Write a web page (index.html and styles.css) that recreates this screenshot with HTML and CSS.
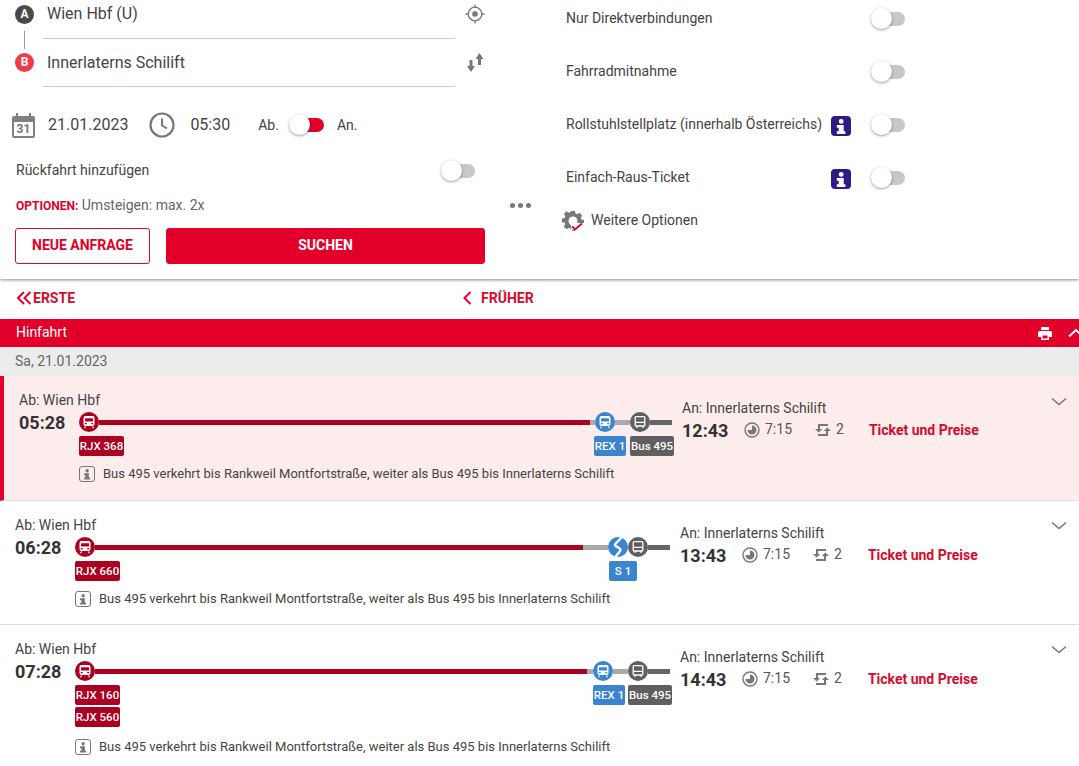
FILE: index.html
```html
<!DOCTYPE html>
<html lang="de">
<head>
  <meta charset="UTF-8" />
  <meta name="viewport" content="width=device-width, initial-scale=1.0"/>
  <title>Verbindungen</title>
  <link rel="stylesheet" href="styles.css">
</head>
<body>

  <!-- Icons -->
  <svg class="sprite" xmlns="http://www.w3.org/2000/svg">
    <symbol id="i-train" viewBox="0 0 20 20">
      <circle cx="10" cy="10" r="10" fill="currentColor"/>
      <path fill="#fff" d="M6.5 4h7A2 2 0 0 1 15.500 6v6a2 2 0 0 1-2 2h-7a2 2 0 0 1-2-2V6a2 2 0 0 1 2-2z"/>
      <rect x="6" y="6.200" width="8" height="3.300" rx=".5" fill="currentColor"/>
      <path fill="currentColor" d="M5.800 11h2v1.300h-2zM12.200 11h2v1.300h-2z"/>
      <path fill="none" stroke="#fff" stroke-width="1.200" d="M6.500 14.500l-1 1.800M13.500 14.500l1 1.800"/>
    </symbol>
    <symbol id="i-bus" viewBox="0 0 20 20">
      <circle cx="10" cy="10" r="10" fill="currentColor"/>
      <rect x="5.200" y="4.600" width="9.600" height="9.400" rx="1" fill="none" stroke="#fff" stroke-width="1.300"/>
      <path fill="none" stroke="#fff" stroke-width="1.200" d="M5.200 10.300h9.600M7 14v2M13 14v2"/>
    </symbol>
    <symbol id="i-sbahn" viewBox="0 0 20 20">
      <circle cx="10" cy="10" r="10" fill="currentColor"/>
      <path fill="none" stroke="#fff" stroke-width="2.400" d="M14 -1C13 3 7 5.500 7 8c0 2 5.500 2.500 5.500 5 0 2-4 4-5 8"/>
    </symbol>
    <symbol id="i-info" viewBox="0 0 20 20">
      <path fill="currentColor" d="M7.800 5.400a2.400 2.400 0 1 1 4.800 0 2.400 2.400 0 0 1-4.800 0zM5.800 9h6.900v6.200h1.700v2.800H5.800v-2.800h1.900v-3.400H5.800z"/>
    </symbol>
    <symbol id="i-chev" viewBox="0 0 16 10">
      <path fill="none" stroke="currentColor" stroke-width="1.500" d="M1 1.500l7 6 7-6"/>
    </symbol>
    <symbol id="i-duration" viewBox="0 0 16 16">
      <circle cx="8" cy="8" r="7" fill="none" stroke="currentColor" stroke-width="1.400"/>
      <path fill="currentColor" d="M8 3.500a4.500 4.500 0 1 1-4.500 4.500H8z"/>
    </symbol>
    <symbol id="i-changes" viewBox="0 0 16 14">
      <path fill="currentColor" d="M3 1h10v2H5v3h2.200L3.600 9.500 0 6h3zM13 13H3v-2h8V8H8.800L12.400 4.500 16 8h-3z"/>
    </symbol>
  </svg>

  <section class="search">
    <div class="search-left">
      <div class="station station-a">
        <span class="badge badge-a">A</span>
        <div class="field">Wien Hbf (U)</div>
        <svg class="field-icon" viewBox="0 0 20 20" width="20" height="20">
          <circle cx="10" cy="10" r="6.800" fill="none" stroke="#777" stroke-width="1.300"/>
          <circle cx="10" cy="10" r="2.800" fill="#777"/>
          <path stroke="#777" stroke-width="1.300" d="M10 .5v3M10 16.500v3M.5 10h3M16.500 10h3"/>
        </svg>
      </div>
      <div class="station station-b">
        <span class="badge badge-b">B</span>
        <div class="field">Innerlaterns Schilift</div>
        <svg class="field-icon" viewBox="0 0 20 20" width="20" height="20">
          <path fill="#777" d="M10.500 7L14.500 1l4 6H16v6h-3V7zM2 14h2.500V8h3v6H10l-4 6z"/>
        </svg>
      </div>

      <div class="when">
        <span class="calendar">
          <span class="calendar-day">31</span>
        </span>
        <span class="when-date">21.01.2023</span>
        <svg class="clock" viewBox="0 0 26 26" width="26" height="26">
          <circle cx="13" cy="13" r="11.500" fill="none" stroke="#777" stroke-width="2.200"/>
          <path fill="none" stroke="#777" stroke-width="2" d="M13 6.500V13.500L18 16.500"/>
        </svg>
        <span class="when-time">05:30</span>
        <span class="when-ab">Ab.</span>
        <span class="toggle toggle-red"></span>
        <span class="when-an">An.</span>
      </div>

      <div class="return-row">
        <span>Rückfahrt hinzufügen</span>
        <span class="toggle"></span>
      </div>

      <div class="options-row">
        <span><b>OPTIONEN:</b> Umsteigen: max. 2x</span>
        <span class="dots"><i></i><i></i><i></i></span>
      </div>

      <div class="buttons">
        <button class="btn btn-outline">NEUE ANFRAGE</button>
        <button class="btn btn-red">SUCHEN</button>
      </div>
    </div>

    <div class="search-right">
      <div class="opt-row">
        <span class="opt-label">Nur Direktverbindungen</span>
        <span class="toggle"></span>
      </div>
      <div class="opt-row">
        <span class="opt-label">Fahrradmitnahme</span>
        <span class="toggle"></span>
      </div>
      <div class="opt-row">
        <span class="opt-label">Rollstuhlstellplatz (innerhalb Österreichs)</span>
        <span class="info-box"><svg width="20" height="20"><use href="#i-info"/></svg></span>
        <span class="toggle"></span>
      </div>
      <div class="opt-row">
        <span class="opt-label">Einfach-Raus-Ticket</span>
        <span class="info-box"><svg width="20" height="20"><use href="#i-info"/></svg></span>
        <span class="toggle"></span>
      </div>
      <div class="more">
        <svg viewBox="0 0 22 22" width="22" height="22">
          <path fill="#777" d="M9 1h4l.5 2.600 1.700.7 2.200-1.500 2.800 2.800-1.500 2.200.7 1.700 2.600.5v4l-2.600.5-.7 1.700 1.500 2.200-2.800 2.800-2.200-1.500-1.700.7L13 21H9l-.5-2.600-1.700-.7-2.200 1.500-2.800-2.800 1.500-2.200-.7-1.700L0 12.500v-4l2.600-.5.7-1.700L1.800 4.100l2.800-2.800 2.200 1.500 1.700-.7z"/>
          <circle cx="11" cy="11" r="4.500" fill="#fff"/>
          <path fill="#fff" d="M9 13h13v9H9z"/>
          <path fill="none" stroke="#c8102e" stroke-width="2" d="M10 16.500l3 3 7-6"/>
          <path fill="none" stroke="#c8102e" stroke-width="1" opacity=".7" d="M10 20.500h3"/>
        </svg>
        <span>Weitere Optionen</span>
      </div>
    </div>
  </section>

  <nav class="pager">
    <a class="pager-first">
      <svg viewBox="0 0 16 14" width="16" height="14"><path fill="none" stroke="#e2002a" stroke-width="2" d="M8 1L2 7l6 6M14.500 1l-6 6 6 6"/></svg>
      ERSTE
    </a>
    <a class="pager-prev">
      <svg viewBox="0 0 10 14" width="10" height="14"><path fill="none" stroke="#e2002a" stroke-width="2" d="M8.500 1l-6 6 6 6"/></svg>
      FRÜHER
    </a>
  </nav>

  <header class="bar">
    <span>Hinfahrt</span>
    <svg class="bar-print" viewBox="0 0 14 13" width="14" height="13">
      <path fill="#fff" d="M3 0h8v3H3zM1.500 4h11A1.500 1.500 0 0 1 14 5.500V10h-3v3H3v-3H0V5.500A1.500 1.500 0 0 1 1.500 4zM4.500 8.500v3h5v-3z"/>
    </svg>
    <svg class="bar-up" viewBox="0 0 16 10" width="16" height="10"><path fill="none" stroke="#fff" stroke-width="2" d="M1 8.500l7-6.500 7 6.500"/></svg>
  </header>
  <div class="day">Sa, 21.01.2023</div>

  <article class="trip trip-active">
    <div class="trip-left">
      <div class="place">Ab: Wien Hbf</div>
      <div class="line-row">
        <strong class="time">05:28</strong>
        <div class="line">
          <svg class="stop red"><use href="#i-train"/></svg>
          <span class="seg seg-red"></span>
          <span class="seg seg-grey w5"></span>
          <svg class="stop blue"><use href="#i-train"/></svg>
          <span class="seg seg-grey w15"></span>
          <svg class="stop dark"><use href="#i-bus"/></svg>
          <span class="seg seg-dark w22"></span>
        </div>
      </div>
      <div class="tags">
        <span class="tag tag-red">RJX 368</span>
        <span class="tag tag-blue tag-push">REX 1</span>
        <span class="tag tag-dark">Bus 495</span>
      </div>
      <div class="note">
        <span class="note-icon"><svg width="14" height="14"><use href="#i-info"/></svg></span>
        Bus 495 verkehrt bis Rankweil Montfortstraße, weiter als Bus 495 bis Innerlaterns Schilift
      </div>
    </div>
    <div class="trip-right">
      <div class="place">An: Innerlaterns Schilift</div>
      <div class="facts">
        <strong class="time">12:43</strong>
        <span class="fact fact-dur"><svg width="16" height="16"><use href="#i-duration"/></svg>7:15</span>
        <span class="fact fact-chg"><svg width="16" height="14"><use href="#i-changes"/></svg>2</span>
        <a class="ticket">Ticket und Preise</a>
      </div>
    </div>
    <svg class="trip-chev"><use href="#i-chev"/></svg>
  </article>

  <article class="trip">
    <div class="trip-left">
      <div class="place">Ab: Wien Hbf</div>
      <div class="line-row">
        <strong class="time">06:28</strong>
        <div class="line">
          <svg class="stop red"><use href="#i-train"/></svg>
          <span class="seg seg-red"></span>
          <span class="seg seg-grey w25"></span>
          <svg class="stop blue"><use href="#i-sbahn"/></svg>
          <svg class="stop dark"><use href="#i-bus"/></svg>
          <span class="seg seg-dark w22"></span>
        </div>
      </div>
      <div class="tags tags-s">
        <span class="tag tag-red">RJX 660</span>
        <span class="tag tag-blue tag-push tag-s">S 1</span>
      </div>
      <div class="note">
        <span class="note-icon"><svg width="14" height="14"><use href="#i-info"/></svg></span>
        Bus 495 verkehrt bis Rankweil Montfortstraße, weiter als Bus 495 bis Innerlaterns Schilift
      </div>
    </div>
    <div class="trip-right">
      <div class="place">An: Innerlaterns Schilift</div>
      <div class="facts">
        <strong class="time">13:43</strong>
        <span class="fact fact-dur"><svg width="16" height="16"><use href="#i-duration"/></svg>7:15</span>
        <span class="fact fact-chg"><svg width="16" height="14"><use href="#i-changes"/></svg>2</span>
        <a class="ticket">Ticket und Preise</a>
      </div>
    </div>
    <svg class="trip-chev"><use href="#i-chev"/></svg>
  </article>

  <article class="trip trip-last">
    <div class="trip-left">
      <div class="place">Ab: Wien Hbf</div>
      <div class="line-row">
        <strong class="time">07:28</strong>
        <div class="line">
          <svg class="stop red"><use href="#i-train"/></svg>
          <span class="seg seg-red"></span>
          <span class="seg seg-grey w6"></span>
          <svg class="stop blue"><use href="#i-train"/></svg>
          <span class="seg seg-grey w15"></span>
          <svg class="stop dark"><use href="#i-bus"/></svg>
          <span class="seg seg-dark w22"></span>
        </div>
      </div>
      <div class="tags">
        <div class="tag-stack">
          <span class="tag tag-red">RJX 160</span>
          <span class="tag tag-red">RJX 560</span>
        </div>
        <span class="tag tag-blue tag-push">REX 1</span>
        <span class="tag tag-dark">Bus 495</span>
      </div>
      <div class="note">
        <span class="note-icon"><svg width="14" height="14"><use href="#i-info"/></svg></span>
        Bus 495 verkehrt bis Rankweil Montfortstraße, weiter als Bus 495 bis Innerlaterns Schilift
      </div>
    </div>
    <div class="trip-right">
      <div class="place">An: Innerlaterns Schilift</div>
      <div class="facts">
        <strong class="time">14:43</strong>
        <span class="fact fact-dur"><svg width="16" height="16"><use href="#i-duration"/></svg>7:15</span>
        <span class="fact fact-chg"><svg width="16" height="14"><use href="#i-changes"/></svg>2</span>
        <a class="ticket">Ticket und Preise</a>
      </div>
    </div>
    <svg class="trip-chev"><use href="#i-chev"/></svg>
  </article>

</body>
</html>
```

FILE: styles.css
```css
html, body {
  height: 766px;
  overflow: hidden;
}

body {
  margin: 0;
  padding: 0;
  font-family: Roboto, 'Liberation Sans', sans-serif;
  font-size: 14px;
  line-height: 20px;
  color: #444;
  background: #fff;
}

.sprite {
  display: none;
}

/* Schalter */
.toggle {
  flex: none;
  position: relative;
  width: 35px;
  height: 22px;
}

.toggle::before {
  content: "";
  position: absolute;
  top: 4px;
  right: 0;
  width: 25px;
  height: 14px;
  border-radius: 7px;
  background-color: #c8c8c8;
}

.toggle::after {
  content: "";
  position: absolute;
  top: 0;
  left: 1px;
  width: 21px;
  height: 21px;
  border-radius: 50%;
  background-color: white;
  box-shadow: 0 1px 3px rgba(0, 0, 0, 0.4);
}

.toggle-red {
  width: 36px;
}

.toggle-red::before {
  background-color: #e2002a;
}

/* Suchformular */
.search {
  display: flex;
  height: 279px;
  box-shadow: 0 1px 3px rgba(0, 0, 0, 0.45);
  position: relative;
}

.search-left {
  width: 540px;
  box-sizing: border-box;
  padding-left: 15px;
}

.search-right {
  width: 339px;
  margin-left: 26px;
  display: grid;
  grid-template-rows: repeat(4, 36px) 24px;
  row-gap: 17px;
  align-content: start;
}

.station {
  display: flex;
  width: 470px;
}

.badge {
  flex: none;
  width: 19px;
  height: 19px;
  margin-right: 9px;
  border-radius: 50%;
  color: white;
  font-size: 12px;
  font-weight: 700;
  line-height: 19px;
  text-align: center;
  position: relative;
}

.badge-a {
  margin-top: 5px;
  background-color: #4a4a4a;
}

.badge-a::after {
  content: "";
  position: absolute;
  left: 9px;
  top: 26px;
  height: 18px;
  border-left: 1px solid #999;
}

.badge-b {
  margin-top: 14px;
  background-color: #ee3b48;
}

.field {
  flex: 1;
  padding: 4px 0 14px 4px;
  border-bottom: 1px solid #ccc;
  font-size: 16px;
  color: #444;
}

.station-b .field {
  padding: 14px 0 13px 4px;
}

.field-icon {
  margin: 4px 0 0 10px;
}

.station-b .field-icon {
  margin-top: 13px;
}

.when {
  display: flex;
  align-items: center;
  height: 36px;
  margin-top: 20px;
  font-size: 16px;
}

.calendar {
  width: 23px;
  height: 22px;
  margin: 4px 0 0 -3px;
  border: 2px solid #808080;
  border-top-width: 6px;
  border-radius: 2px;
  box-sizing: border-box;
  color: #777;
  font-size: 12px;
  font-weight: 700;
  line-height: 14px;
  text-align: center;
  position: relative;
}

.calendar::before {
  content: "";
  position: absolute;
  left: 2px;
  right: 2px;
  top: -9px;
  height: 3px;
  border-left: 2px solid #808080;
  border-right: 2px solid #808080;
}

.when-date {
  margin-left: 13px;
}

.clock {
  margin-left: 21px;
}

.when-time {
  margin-left: 15px;
}

.when-ab {
  margin-left: 28px;
  font-size: 14px;
}

.when .toggle {
  margin-left: 9px;
}

.when-an {
  margin-left: 13px;
  font-size: 14px;
}

.return-row {
  display: flex;
  justify-content: space-between;
  align-items: center;
  width: 459px;
  height: 22px;
  margin: 16px 0 0 1px;
}

.return-row .toggle,
.opt-row .toggle {
  margin-top: 2px;
}

.options-row {
  display: flex;
  justify-content: space-between;
  align-items: center;
  width: 515px;
  margin: 14px 0 0 1px;
  color: #666;
}

.options-row b {
  color: #e2002a;
  font-size: 12px;
}

.dots {
  display: flex;
  gap: 3px;
}

.dots i {
  width: 5px;
  height: 5px;
  border-radius: 50%;
  background-color: #777;
}

.buttons {
  display: flex;
  gap: 16px;
  margin-top: 12px;
}

.btn {
  height: 36px;
  padding-bottom: 3px;
  border-radius: 3px;
  font-family: inherit;
  font-size: 14px;
  font-weight: 700;
  color: #e2002a;
  background: white;
  border: 1px solid #c8102e;
  cursor: pointer;
}

.btn-outline {
  width: 135px;
}

.btn-red {
  width: 319px;
  background-color: #e2002a;
  border-color: #e2002a;
  color: white;
}

.opt-row {
  display: flex;
  align-items: center;
}

.opt-label {
  flex: 1;
}

.info-box {
  display: flex;
  width: 20px;
  height: 20px;
  margin: 4px 19px 0 0;
  border-radius: 4px;
  background-color: #2e1a87;
  color: white;
}

.more {
  display: flex;
  align-items: center;
  gap: 7px;
  margin: -8px 0 0 -4px;
}

.more svg {
  margin-top: 2px;
}

/* Blättern */
.pager {
  display: flex;
  align-items: center;
  box-sizing: border-box;
  height: 40px;
  padding-bottom: 2px;
  font-weight: 700;
  color: #d40b2d;
}

.pager a {
  display: flex;
  align-items: center;
}

.pager-first {
  width: 446px;
  padding-left: 16px;
  gap: 1px;
}

.pager-prev {
  gap: 9px;
}

.bar {
  display: flex;
  align-items: center;
  height: 28px;
  padding-left: 16px;
  background-color: #e2002a;
  color: white;
  overflow: hidden;
}

.bar span {
  margin-top: -2px;
}

.bar-print {
  margin-left: auto;
}

.bar-up {
  flex: none;
  margin: 0 -5px 0 16px;
}

.day {
  height: 29px;
  padding-left: 15px;
  background-color: #ececec;
  color: #666;
  line-height: 29px;
}

/* Verbindungen */
.trip {
  display: flex;
  box-sizing: border-box;
  height: 124px;
  padding: 16px 0 0 15px;
  border-bottom: 1px solid #ddd;
  position: relative;
}

.trip-active {
  height: 125px;
  padding-left: 15px;
  border-left: 4px solid #e2002a;
  background-color: #fdecec;
}

.trip-last {
  border-bottom: none;
  height: 141px;
}

.trip-left {
  width: 655px;
  flex: none;
}

.trip-active .trip-left {
  width: 653px;
}

.place {
  height: 16px;
  line-height: 16px;
}

.line-row {
  display: flex;
  align-items: center;
  margin-top: 4px;
}

.time {
  flex: none;
  width: 60px;
  height: 20px;
  font-size: 18px;
  line-height: 22px;
  color: #333;
}

.line {
  flex: 1;
  display: flex;
  align-items: center;
}

.stop {
  flex: none;
  width: 20px;
  height: 20px;
}

.red {
  color: #ab0020;
}

.blue {
  color: #3a84d0;
}

.dark {
  color: #5f5f5f;
}

.seg {
  height: 5px;
}

.seg-red {
  flex: 1;
  background-color: #ab0020;
}

.seg-grey {
  background-color: #aaa;
}

.seg-dark {
  background-color: #666;
}

.w5 { width: 5px; }
.w6 { width: 6px; }
.w15 { width: 15px; }
.w22 { width: 22px; }
.w25 { width: 25px; }

.tags {
  display: flex;
  align-items: flex-start;
  gap: 4px;
  margin: 4px -2px 0 60px;
}

.trip-last .tags {
  gap: 3px;
}

.tags-s {
  margin-right: 33px;
}

.tag-stack {
  display: flex;
  flex-direction: column;
  gap: 2px;
}

.tag {
  box-sizing: border-box;
  width: 44px;
  height: 20px;
  border-radius: 2px;
  color: white;
  font-size: 11.5px;
  font-weight: 500;
  line-height: 20px;
  text-align: center;
  white-space: nowrap;
}

.tag-red {
  width: 45px;
  background-color: #ab0020;
}

.tag-blue {
  width: 32px;
  background-color: #3a84d0;
}

.tag-dark {
  background-color: #5f5f5f;
}

.tag-push {
  margin-left: auto;
}

.tag-s {
  width: 28px;
}

.note {
  display: flex;
  align-items: center;
  gap: 8px;
  margin: 8px 0 0 60px;
  font-size: 13px;
  white-space: nowrap;
}

.trip-last .note {
  margin-top: 10px;
}

.note-icon {
  display: flex;
  align-items: center;
  justify-content: center;
  box-sizing: border-box;
  width: 16px;
  height: 16px;
  border: 1px solid #777;
  border-radius: 3px;
  color: #777;
}

.trip-right {
  margin-left: 10px;
  padding-top: 8px;
}

.facts {
  display: flex;
  align-items: center;
  margin-top: 4px;
  white-space: nowrap;
}

.facts .time {
  width: 62px;
}

.fact {
  display: flex;
  align-items: center;
  gap: 5px;
  margin-top: -2px;
  color: #555;
}

.fact svg {
  margin-top: 2px;
  color: #777;
}

.fact-chg {
  margin-left: 23px;
}

.ticket {
  margin-left: 26px;
  color: #d40b2d;
  font-weight: 700;
}

.trip-active .ticket {
  margin-left: 25px;
}

.trip-chev {
  position: absolute;
  right: 12px;
  top: 20px;
  width: 16px;
  height: 10px;
  color: #777;
}

.trip-active .trip-chev {
  top: 21px;
}
```
